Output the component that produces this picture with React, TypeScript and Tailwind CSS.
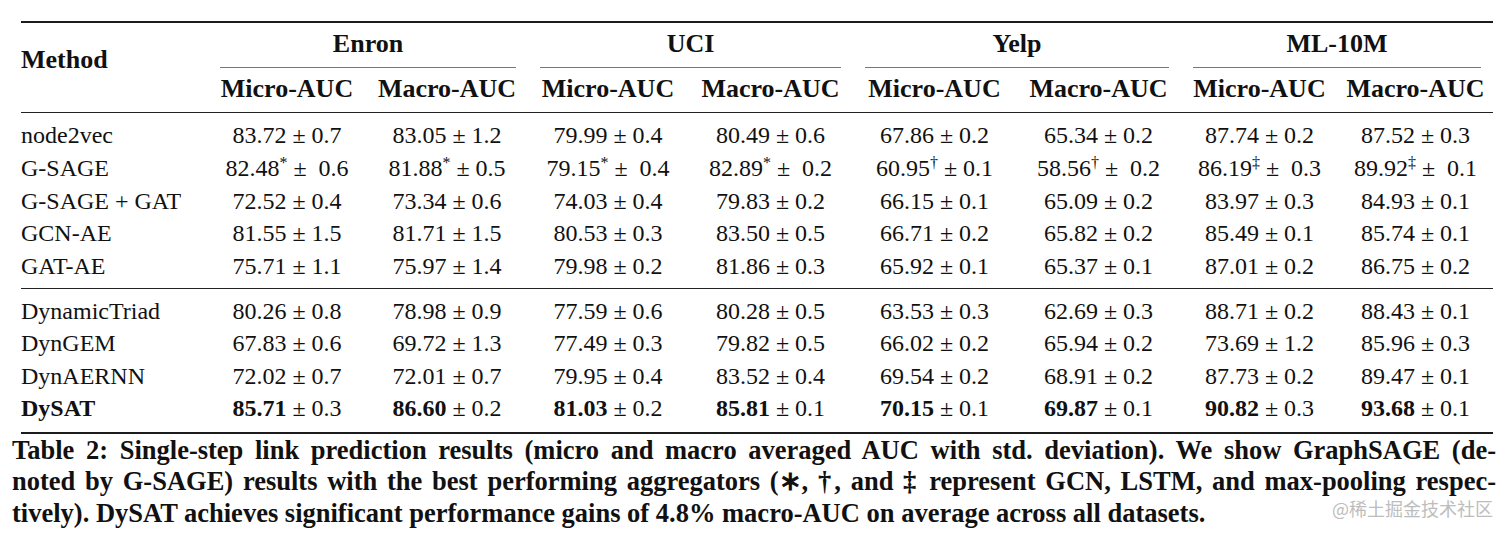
type Cell = { v: string; sd: string; sup?: string; wide?: boolean };

const c = (v: string, sd: string, sup?: string, wide?: boolean): Cell => ({ v, sd, sup, wide });

const cols =
  "grid grid-cols-[187px_158px_162px_160px_165px_163px_165px_157px_155px]";

const staticRows: { name: string; cells: Cell[] }[] = [
  {
    name: "node2vec",
    cells: [c("83.72", "0.7"), c("83.05", "1.2"), c("79.99", "0.4"), c("80.49", "0.6"), c("67.86", "0.2"), c("65.34", "0.2"), c("87.74", "0.2"), c("87.52", "0.3")],
  },
  {
    name: "G-SAGE",
    cells: [
      c("82.48", "0.6", "*", true),
      c("81.88", "0.5", "*"),
      c("79.15", "0.4", "*", true),
      c("82.89", "0.2", "*", true),
      c("60.95", "0.1", "†"),
      c("58.56", "0.2", "†", true),
      c("86.19", "0.3", "‡", true),
      c("89.92", "0.1", "‡", true),
    ],
  },
  {
    name: "G-SAGE + GAT",
    cells: [c("72.52", "0.4"), c("73.34", "0.6"), c("74.03", "0.4"), c("79.83", "0.2"), c("66.15", "0.1"), c("65.09", "0.2"), c("83.97", "0.3"), c("84.93", "0.1")],
  },
  {
    name: "GCN-AE",
    cells: [c("81.55", "1.5"), c("81.71", "1.5"), c("80.53", "0.3"), c("83.50", "0.5"), c("66.71", "0.2"), c("65.82", "0.2"), c("85.49", "0.1"), c("85.74", "0.1")],
  },
  {
    name: "GAT-AE",
    cells: [c("75.71", "1.1"), c("75.97", "1.4"), c("79.98", "0.2"), c("81.86", "0.3"), c("65.92", "0.1"), c("65.37", "0.1"), c("87.01", "0.2"), c("86.75", "0.2")],
  },
];

const dynamicRows: { name: string; cells: Cell[]; bold?: boolean }[] = [
  {
    name: "DynamicTriad",
    cells: [c("80.26", "0.8"), c("78.98", "0.9"), c("77.59", "0.6"), c("80.28", "0.5"), c("63.53", "0.3"), c("62.69", "0.3"), c("88.71", "0.2"), c("88.43", "0.1")],
  },
  {
    name: "DynGEM",
    cells: [c("67.83", "0.6"), c("69.72", "1.3"), c("77.49", "0.3"), c("79.82", "0.5"), c("66.02", "0.2"), c("65.94", "0.2"), c("73.69", "1.2"), c("85.96", "0.3")],
  },
  {
    name: "DynAERNN",
    cells: [c("72.02", "0.7"), c("72.01", "0.7"), c("79.95", "0.4"), c("83.52", "0.4"), c("69.54", "0.2"), c("68.91", "0.2"), c("87.73", "0.2"), c("89.47", "0.1")],
  },
  {
    name: "DySAT",
    bold: true,
    cells: [c("85.71", "0.3"), c("86.60", "0.2"), c("81.03", "0.2"), c("85.81", "0.1"), c("70.15", "0.1"), c("69.87", "0.1"), c("90.82", "0.3"), c("93.68", "0.1")],
  },
];

const datasets = ["Enron", "UCI", "Yelp", "ML-10M"];

function Value({ cell, bold }: { cell: Cell; bold?: boolean }) {
  return (
    <div className="text-center whitespace-pre">
      <span className={bold ? "font-bold" : ""}>{cell.v}</span>
      {cell.sup && <sup className="text-[16px] top-[-0.5em]">{cell.sup}</sup>}
      {cell.wide ? " ±  " : " ± "}
      {cell.sd}
    </div>
  );
}

export default function App() {
  return (
    <div className="relative w-[1512px] h-[536px] overflow-hidden bg-white text-[#111]">
      <div className="pt-[21px] pl-[21px] w-[1493px] font-['Liberation_Serif']">
        <div className="h-[2px] bg-[#1c1c1c]" />

        {/* header */}
        <div className={`${cols} text-[26px] font-bold leading-[36px]`}>
          <div className="row-span-2 pt-[19px]">Method</div>
          {datasets.map((d) => (
            <div key={d} className="col-span-2 flex flex-col pt-[3px]">
              <div className="text-center">{d}</div>
              <div className="mx-3 mt-[5px] h-px bg-[#777]" />
            </div>
          ))}
          {datasets.map((d) => [
            <div key={d + "mi"} className="text-center pt-[3px] pb-[5px]">Micro-AUC</div>,
            <div key={d + "ma"} className="text-center pt-[3px] pb-[5px]">Macro-AUC</div>,
          ])}
        </div>
        <div className="h-px bg-[#222]" />

        {/* static methods */}
        <div className="pt-[6px] pb-[5px] text-[24px] leading-[32.8px]">
          {staticRows.map((r) => (
            <div key={r.name} className={cols}>
              <div>{r.name}</div>
              {r.cells.map((cell, i) => (
                <Value key={i} cell={cell} />
              ))}
            </div>
          ))}
        </div>
        <div className="h-px bg-[#222]" />

        {/* dynamic methods */}
        <div className="pt-[6px] pb-[7px] text-[24px] leading-[32.5px]">
          {dynamicRows.map((r) => (
            <div key={r.name} className={cols}>
              <div className={r.bold ? "font-bold" : ""}>{r.name}</div>
              {r.cells.map((cell, i) => (
                <Value key={i} cell={cell} bold={r.bold} />
              ))}
            </div>
          ))}
        </div>
        <div className="h-[2px] bg-[#1c1c1c]" />
      </div>

      {/* caption */}
      <div className="relative mt-[1px] ml-[12px] w-[1484px] text-[26.5px] leading-[31.5px] font-bold font-['Liberation_Serif']">
        <div className="whitespace-nowrap text-justify [text-align-last:justify]">
          Table 2: Single-step link prediction results (micro and macro averaged AUC with std. deviation). We show GraphSAGE (de-
        </div>
        <div className="whitespace-nowrap text-justify [text-align-last:justify]">
          noted by G-SAGE) results with the best performing aggregators (∗, †, and ‡ represent GCN, LSTM, and max-pooling respec-
        </div>
        <div className="whitespace-nowrap">
          tively). DySAT achieves significant performance gains of 4.8% macro-AUC on average across all datasets.
        </div>
        <div className="absolute right-[3px] top-[61px] text-[18px] leading-[24px] font-normal text-[#bdbdbd] font-['Noto_Sans_CJK_SC']">
          @稀土掘金技术社区
        </div>
      </div>
    </div>
  );
}
